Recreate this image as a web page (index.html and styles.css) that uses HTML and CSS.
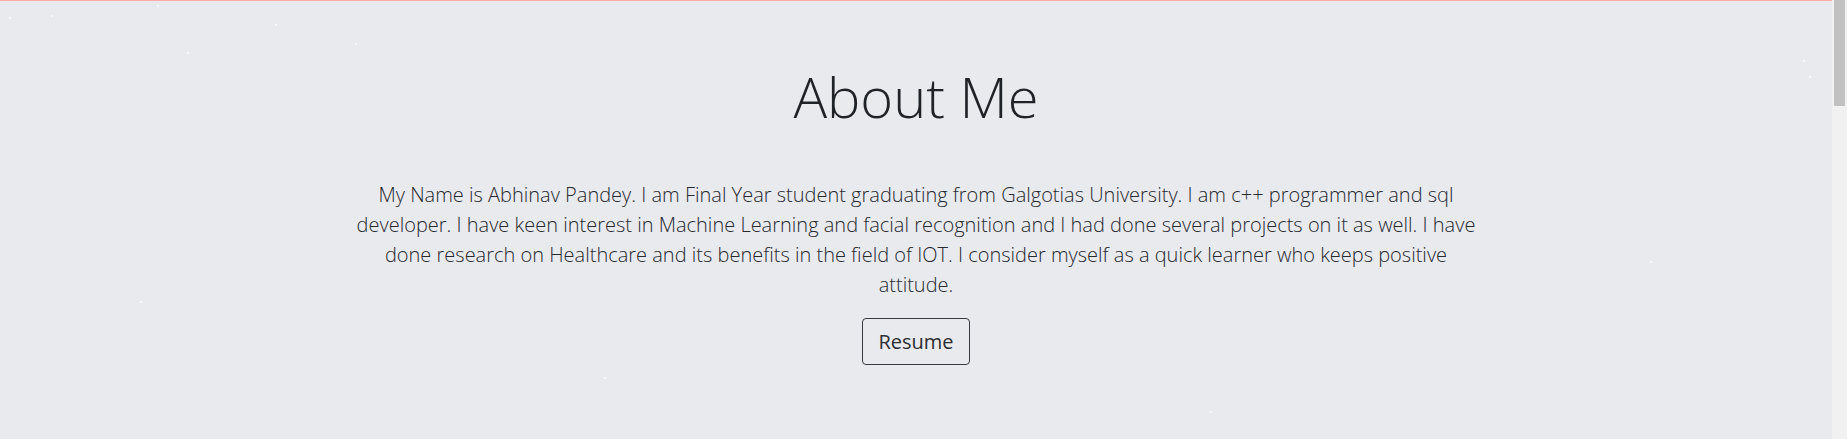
FILE: index.html
```html
<!DOCTYPE html>
<html lang="en">
<head>
<meta charset="utf-8">
<title>About Me</title>
<link rel="stylesheet" href="styles.css">
</head>
<body>
<div class="window">
  <div class="page">
    <div class="particles" aria-hidden="true">
      <span class="dot" style="left:9px;top:16px"></span>
      <span class="dot" style="left:51px;top:14px"></span>
      <span class="dot" style="left:157px;top:4px"></span>
      <span class="dot" style="left:187px;top:51px"></span>
      <span class="dot" style="left:275px;top:23px"></span>
      <span class="dot" style="left:355px;top:42px"></span>
      <span class="dot" style="left:1803px;top:59px"></span>
      <span class="dot" style="left:1809px;top:75px"></span>
      <span class="dot" style="left:1033px;top:217px"></span>
      <span class="dot" style="left:604px;top:376px"></span>
      <span class="dot" style="left:1210px;top:410px"></span>
      <span class="dot" style="left:140px;top:300px"></span>
      <span class="dot" style="left:1650px;top:260px"></span>
    </div>
    <section class="about">
      <div class="container">
        <h1 class="title">About Me</h1>
        <p class="lead">My Name is Abhinav Pandey. I am Final Year student graduating from Galgotias University. I am c++ programmer and sql developer. I have keen interest in Machine Learning and facial recognition and I had done several projects on it as well. I have done research on Healthcare and its benefits in the field of IOT. I consider myself as a quick learner who keeps positive attitude.</p>
        <a class="btn" href="#">Resume</a>
      </div>
    </section>
  </div>
  <div class="scrollbar" aria-hidden="true"><div class="thumb"></div></div>
</div>
</body>
</html>
```
FILE: styles.css
```css
html, body {
  margin: 0;
  padding: 0;
  height: 100%;
  overflow: hidden;
}
body {
  background: #e9eaee;
  font-family: "Open Sans", "Noto Sans", sans-serif;
  color: #212529;
}
.window {
  display: flex;
  height: 100vh;
}
.page {
  position: relative;
  flex: 1;
  min-width: 0;
  border-top: 1px solid #ffa8a8;
}
.scrollbar {
  width: 15px;
  flex: none;
  background: #f1f1f1;
  display: flex;
  flex-direction: column;
}
.thumb {
  height: 106px;
  margin: 0 2px;
  background: #c1c1c1;
}
.particles {
  position: absolute;
  inset: 0;
  pointer-events: none;
}
.dot {
  position: absolute;
  width: 2px;
  height: 2px;
  border-radius: 50%;
  background: #ffffff;
  opacity: 0.8;
}
.about {
  position: relative;
  padding-top: 62px;
}
.container {
  width: 1130px;
  margin: 0 auto;
  display: flex;
  flex-direction: column;
  align-items: center;
  text-align: center;
}
.title {
  margin: 0 0 50px;
  font-size: 56px;
  font-weight: 300;
  line-height: 1.2;
  color: #1f2226;
}
.lead {
  margin: 0 0 18px;
  font-size: 20px;
  font-weight: 300;
  line-height: 30px;
  color: #26292e;
}
.btn {
  display: inline-block;
  padding: 8px 15px 7px;
  font-size: 20px;
  line-height: 30px;
  font-weight: 400;
  color: #2b2e33;
  text-decoration: none;
  border: 1px solid #343a40;
  border-radius: 4px;
}
```
